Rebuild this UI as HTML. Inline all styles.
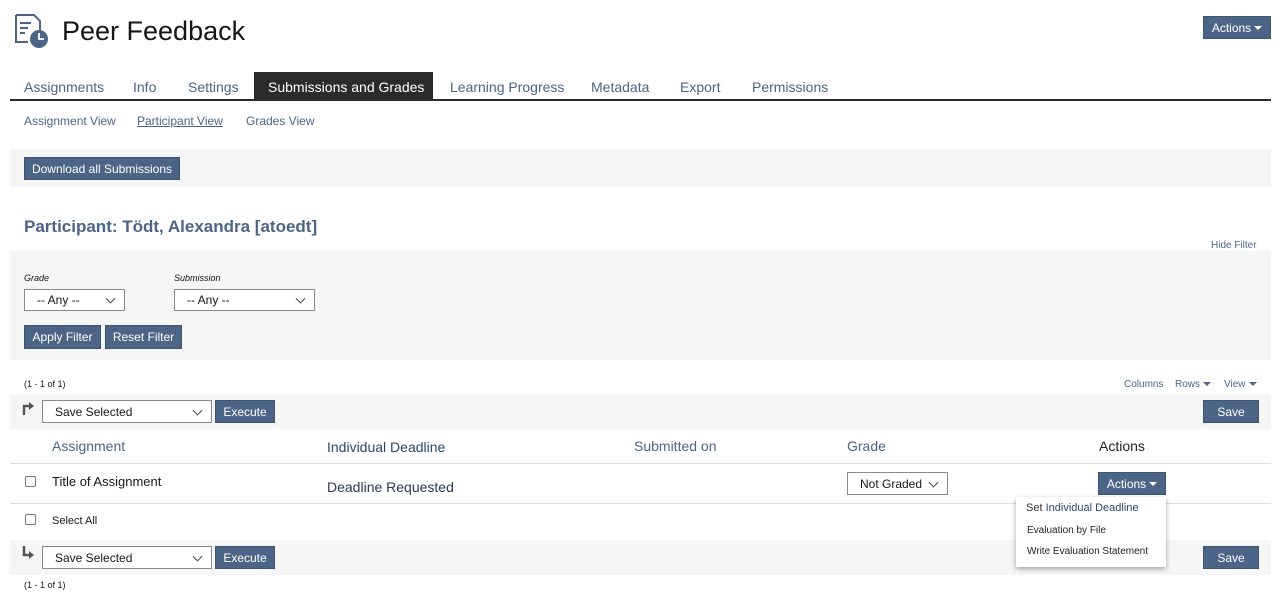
<!DOCTYPE html>
<html><head><meta charset="utf-8"><style>
*{box-sizing:border-box;margin:0;padding:0}
body{width:1280px;height:594px;background:#fff;font-family:"Liberation Sans",sans-serif;color:#161616;position:relative;overflow:hidden}
.a{position:absolute;white-space:nowrap}
.btn{position:absolute;background:#4c6586;color:#fff;font-size:12px;display:flex;align-items:center;justify-content:center;border:1px solid #3e5470}
.sel{position:absolute;background:#fff;border:1px solid #8a8a8a;font-size:12px;display:flex;align-items:center;padding-left:12px;color:#161616}
.sel:after{content:"";position:absolute;right:10px;top:50%;width:6px;height:6px;border-right:1px solid #444;border-bottom:1px solid #444;transform:translateY(-70%) rotate(45deg)}
.panel{position:absolute;left:10px;width:1261px;background:#f6f6f6}
.blue{color:#4c6586}
.cb{position:absolute;width:11px;height:11px;border:1px solid #777;border-radius:2px;background:#fff}
.caret{display:inline-block;width:0;height:0;border-left:4px solid transparent;border-right:4px solid transparent;border-top:4px solid currentColor;vertical-align:middle;margin-left:3px}
</style></head><body>
<svg class="a" style="left:14px;top:14px" width="36" height="36" viewBox="0 0 36 36">
<path d="M2 1h18l6 6v12" fill="none" stroke="#4c6586" stroke-width="2"/><path d="M2 1v27h12" fill="none" stroke="#4c6586" stroke-width="2"/>
<rect x="6" y="8" width="11" height="2" fill="#4c6586"/><rect x="6" y="13" width="8" height="2" fill="#4c6586"/><rect x="6" y="18" width="5" height="2" fill="#4c6586"/>
<circle cx="25" cy="25" r="9" fill="#4c6586"/><path d="M25 19v6h5" fill="none" stroke="#fff" stroke-width="1.8"/></svg>
<div class="a" style="left:62px;top:16px;font-size:27px;color:#161616">Peer Feedback</div>
<div class="btn" style="left:1203px;top:16px;width:68px;height:23px">Actions<span class="caret"></span></div>

<div class="a blue" style="left:24px;top:79px;font-size:14px">Assignments</div>
<div class="a blue" style="left:133px;top:79px;font-size:14px">Info</div>
<div class="a blue" style="left:188px;top:79px;font-size:14px">Settings</div>
<div class="a" style="left:254px;top:72px;width:179px;height:28px;background:#2b2b2b;color:#fff;font-size:14px;padding:7px 0 0 14px">Submissions and Grades</div>
<div class="a blue" style="left:450px;top:79px;font-size:14px">Learning Progress</div>
<div class="a blue" style="left:591px;top:79px;font-size:14px">Metadata</div>
<div class="a blue" style="left:680px;top:79px;font-size:14px">Export</div>
<div class="a blue" style="left:752px;top:79px;font-size:14px">Permissions</div>
<div class="a" style="left:10px;top:99px;width:1261px;height:2px;background:#2b2b2b"></div>

<div class="a blue" style="left:24px;top:114px;font-size:12px">Assignment View</div>
<div class="a blue" style="left:137px;top:114px;font-size:12px;text-decoration:underline">Participant View</div>
<div class="a blue" style="left:246px;top:114px;font-size:12px">Grades View</div>

<div class="panel" style="top:149px;height:38px"></div>
<div class="btn" style="left:24px;top:157px;width:156px;height:23px">Download all Submissions</div>

<div class="a blue" style="left:24px;top:217px;font-size:17px;font-weight:bold">Participant: Tödt, Alexandra [atoedt]</div>
<div class="a blue" style="left:1211px;top:240px;font-size:10px">Hide Filter</div>

<div class="panel" style="top:251px;height:109px"></div>
<div class="a" style="left:24px;top:273px;font-size:9px;font-style:italic">Grade</div>
<div class="a" style="left:174px;top:273px;font-size:9px;font-style:italic">Submission</div>
<div class="sel" style="left:24px;top:289px;width:101px;height:22px">-- Any --</div>
<div class="sel" style="left:174px;top:289px;width:141px;height:22px">-- Any --</div>
<div class="btn" style="left:24px;top:325px;width:77px;height:24px">Apply Filter</div>
<div class="btn" style="left:105px;top:325px;width:77px;height:24px">Reset Filter</div>

<div class="a" style="left:24px;top:379px;font-size:9px">(1 - 1 of 1)</div>
<div class="a blue" style="left:1124px;top:379px;font-size:10px">Columns</div>
<div class="a blue" style="left:1175px;top:379px;font-size:10px">Rows<span class="caret"></span></div>
<div class="a blue" style="left:1224px;top:379px;font-size:10px">View<span class="caret"></span></div>

<div class="panel" style="top:395px;height:34px"></div>
<svg class="a" style="left:22px;top:401px" width="12" height="14"><path d="M2 14V5h6" fill="none" stroke="#555" stroke-width="2.5"/><path d="M7 1l5 4-5 4z" fill="#555"/></svg>
<div class="sel" style="left:42px;top:400px;width:170px;height:23px">Save Selected</div>
<div class="btn" style="left:215px;top:400px;width:60px;height:23px">Execute</div>
<div class="btn" style="left:1203px;top:400px;width:56px;height:23px">Save</div>

<div class="a blue" style="left:52px;top:438px;font-size:14px">Assignment</div>
<div class="a" style="left:327px;top:439px;font-size:14px;color:#2a4870">Individual Deadline</div>
<div class="a blue" style="left:634px;top:438px;font-size:14px">Submitted on</div>
<div class="a blue" style="left:847px;top:438px;font-size:14px">Grade</div>
<div class="a" style="left:1099px;top:438px;font-size:14px;color:#222">Actions</div>
<div class="a" style="left:10px;top:463px;width:1261px;height:1px;background:#ddd"></div>

<div class="cb" style="left:25px;top:476px"></div>
<div class="a" style="left:52px;top:474px;font-size:13px">Title of Assignment</div>
<div class="a" style="left:327px;top:479px;font-size:14px;color:#2b3a4d">Deadline Requested</div>
<div class="sel" style="left:847px;top:472px;width:101px;height:23px">Not Graded</div>
<div class="btn" style="left:1098px;top:472px;width:68px;height:23px">Actions<span class="caret"></span></div>
<div class="a" style="left:10px;top:503px;width:1261px;height:1px;background:#ddd"></div>

<div class="cb" style="left:25px;top:514px"></div>
<div class="a" style="left:52px;top:515px;font-size:11px">Select All</div>

<div class="panel" style="top:540px;height:35px"></div>
<svg class="a" style="left:22px;top:546px" width="12" height="14"><path d="M2 0v9h6" fill="none" stroke="#555" stroke-width="2.5"/><path d="M7 5l5 4-5 4z" fill="#555"/></svg>
<div class="sel" style="left:42px;top:546px;width:170px;height:23px">Save Selected</div>
<div class="btn" style="left:215px;top:546px;width:60px;height:23px">Execute</div>
<div class="btn" style="left:1203px;top:546px;width:56px;height:23px">Save</div>
<div class="a" style="left:24px;top:580px;font-size:9px">(1 - 1 of 1)</div>

<div class="a" style="left:1016px;top:497px;width:150px;height:70px;background:#fff;box-shadow:0 2px 5px rgba(0,0,0,.35)">
<div class="a" style="left:10px;top:5px;font-size:11px;color:#333">Set <span style="color:#2a4870">Individual Deadline</span></div>
<div class="a" style="left:11px;top:28px;font-size:10px;color:#222">Evaluation by File</div>
<div class="a" style="left:11px;top:49px;font-size:10px;color:#222">Write Evaluation Statement</div>
</div>
</body></html>
